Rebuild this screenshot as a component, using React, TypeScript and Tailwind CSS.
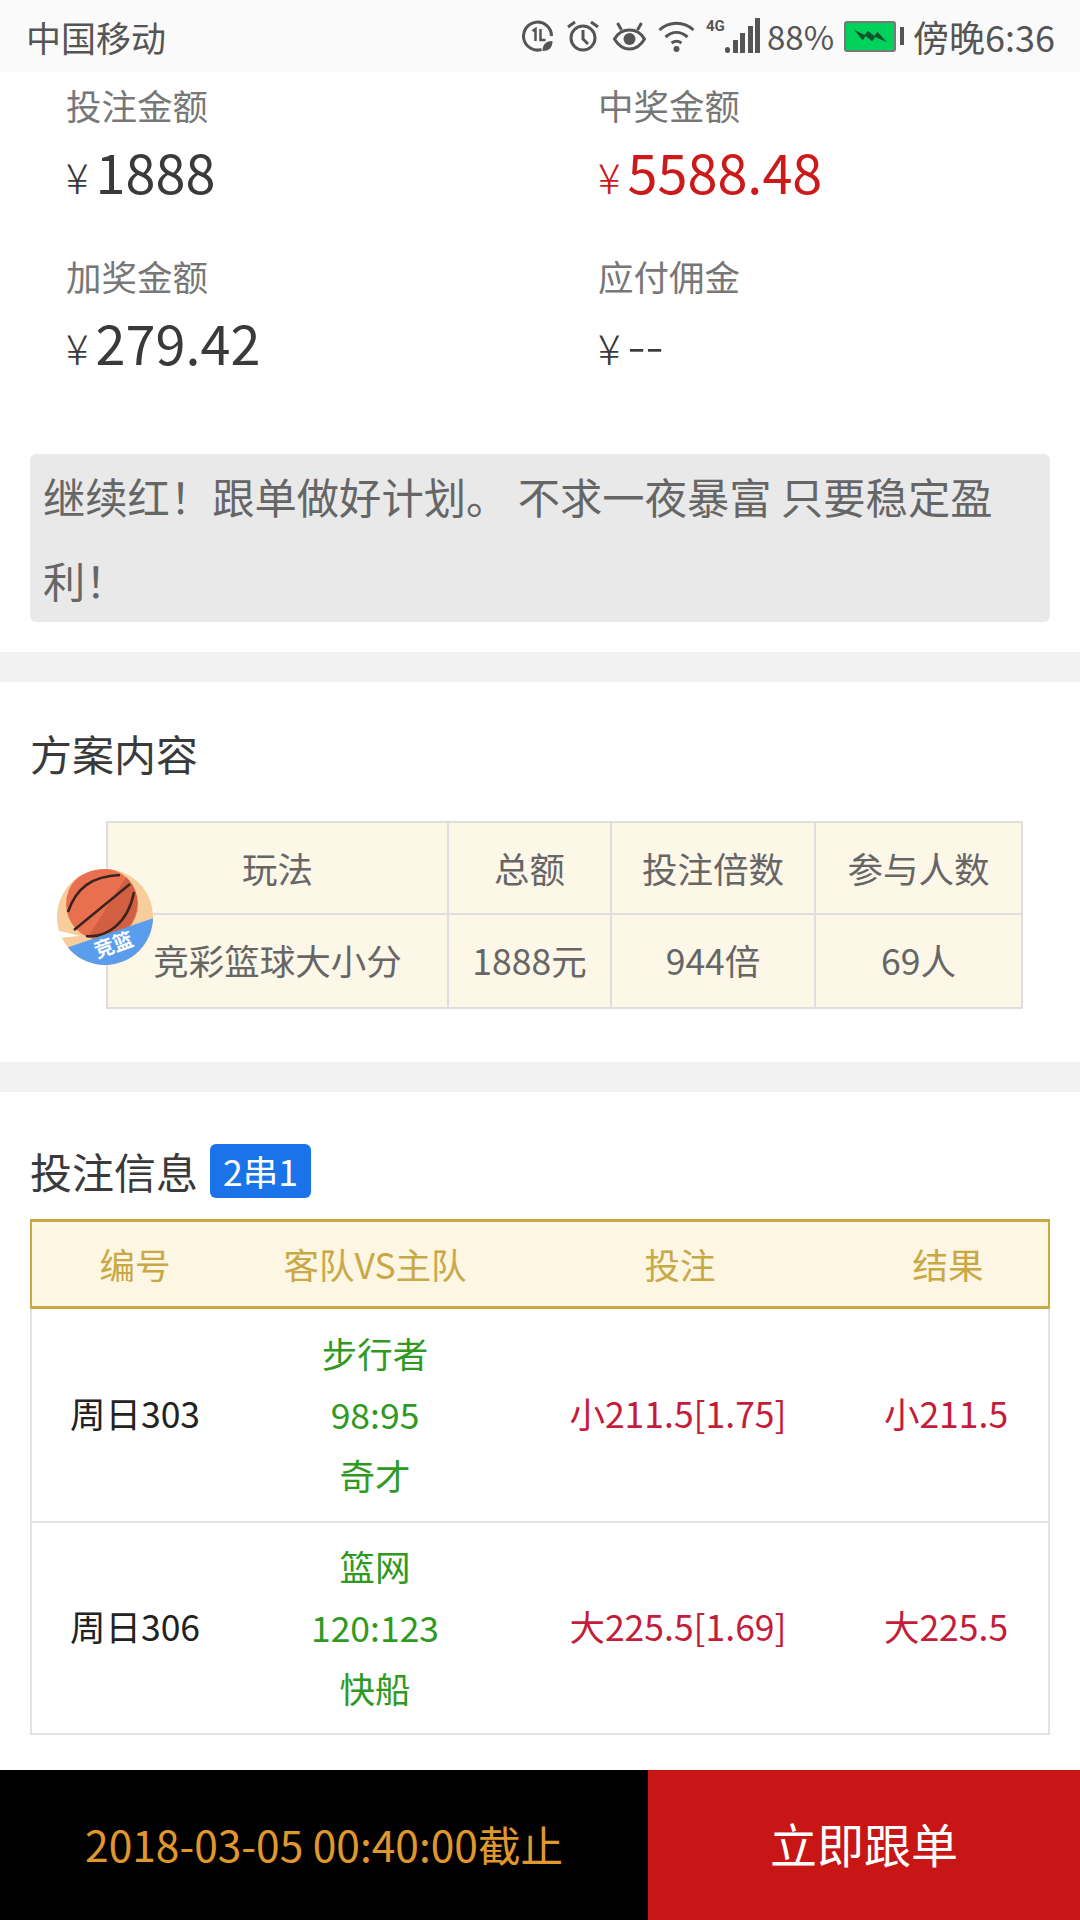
import React from "react";

const cjk = "font-['Noto_Sans_CJK_SC','Noto_Sans',sans-serif]";

const StatusIcons = () => (
  <div className="flex items-center text-[#555]">
    {/* 1L leaf data saver */}
    <svg width="33" height="34" viewBox="0 0 32 34" fill="none" stroke="#555" strokeWidth="3">
      <path d="M20 30.5A14 14 0 1 1 30 17" />
      <path d="M11 12l3-2v12M19 10v11h5" strokeWidth="2.5" />
      <path d="M21 32c0-7 4-10 10-10 0 7-4 10-10 10z" fill="#555" stroke="none" />
    </svg>
    {/* alarm */}
    <svg width="34" height="34" viewBox="0 0 34 34" className="ml-[12px]" fill="none" stroke="#555" strokeWidth="3">
      <circle cx="17" cy="19" r="12" />
      <path d="M17 11v9l5 5" />
      <path d="M2 8l7-5M32 8l-7-5" />
    </svg>
    {/* eye comfort */}
    <svg width="35" height="34" viewBox="0 0 34 34" className="ml-[12px]" fill="none" stroke="#555" strokeWidth="3">
      <path d="M2 20c4-7 9-9 15-9s11 2 15 9c-4 7-9 10-15 10S6 27 2 20z" />
      <circle cx="17" cy="20" r="6" fill="#555" stroke="none" />
      <path d="M5 4l4 7M29 4l-4 7" />
    </svg>
    {/* wifi */}
    <svg width="37" height="34" viewBox="0 0 36 34" className="ml-[11px]" fill="none" stroke="#555" strokeWidth="3">
      <path d="M1 11c10-9 24-9 34 0M7 18c7-6 15-6 22 0M13 24c3-2 7-2 10 0" />
      <circle cx="18" cy="30" r="3" fill="#555" stroke="none" />
    </svg>
    {/* 4G + signal */}
    <div className="relative ml-[11px] h-[34px] w-[54px]">
      <span className="absolute left-0 top-[-3px] font-['Roboto',sans-serif] text-[15px] font-bold leading-[20px] text-[#555]">4G</span>
      <div className="absolute bottom-0 left-[19px] flex items-end gap-[2.5px]">
        <div className="h-[6px] w-[5px] rounded-full bg-[#555]" />
        <div className="h-[13px] w-[5px] bg-[#555]" />
        <div className="h-[20px] w-[5px] bg-[#555]" />
        <div className="h-[27px] w-[5px] bg-[#555]" />
        <div className="h-[35px] w-[5px] bg-[#555]" />
      </div>
    </div>
    <span className="ml-[7px] text-[33px] leading-none">88%</span>
    {/* battery */}
    <div className="ml-[10px] flex items-center">
      <div className="flex h-[31px] w-[52px] items-center justify-center rounded-[3px] border-2 border-[#777] bg-[#00d25b]">
        <svg width="36" height="18" viewBox="0 0 34 16" fill="#14532d">
          <path d="M2 2l10 5 3-4 6 5 3-4 9 10-11-5-3 4-6-5-3 4z" />
        </svg>
      </div>
      <div className="ml-[4px] h-[18px] w-[4px] bg-[#555]" />
    </div>
    <span className="ml-[9px] text-[36px] leading-none">傍晚6:36</span>
  </div>
);

const Amount = ({ label, value, red, dash }: { label: string; value: string; red?: boolean; dash?: boolean }) => (
  <div>
    <div className="text-[35.5px] leading-[50px] text-[#777]">{label}</div>
    <div className={`mt-[6px] flex items-baseline leading-[70px] ${red ? "text-[#cc1a1a]" : "text-[#3a3a3a]"}`}>
      <span className="mr-[7px] text-[42px] font-light">¥</span>
      <span className={dash ? "text-[54px] font-light" : "text-[54px]"}>{value}</span>
    </div>
  </div>
);

const betRows = [
  { no: "周日303", away: "步行者", score: "98:95", home: "奇才", bet: "小211.5[1.75]", result: "小211.5" },
  { no: "周日306", away: "篮网", score: "120:123", home: "快船", bet: "大225.5[1.69]", result: "大225.5" },
];

const Ball = () => (
  <svg width="98" height="98" viewBox="0 0 98 98" className="absolute left-[-52px] top-[45px]">
    <defs>
      <clipPath id="badge">
        <circle cx="49" cy="49" r="48" />
      </clipPath>
    </defs>
    <g clipPath="url(#badge)">
      <rect width="98" height="98" fill="#f6cd9b" />
      <circle cx="46" cy="36" r="36" fill="#e8704e" />
      <path d="M70 9a36 36 0 0 1-8 58 36 36 0 0 1-30 2" fill="#d25f42" />
      <path d="M12 44C20 20 36 8 64 7M18 62L74 16M30 68c20 2 42-12 48-44" fill="none" stroke="#3a2420" strokeWidth="2.5" />
      <path d="M0 62l24 6-24 2z" fill="#fff" />
      <path d="M10 80L98 50V98H10z" fill="#5b9ded" />
      <text x="58" y="84" textAnchor="middle" transform="rotate(-20 58 78)" fontSize="20" fontWeight="700" fill="#fff" fontFamily="Noto Sans CJK SC">竞篮</text>
    </g>
  </svg>
);

export default function App() {
  return (
    <div className={`flex h-[1920px] w-[1080px] flex-col overflow-hidden bg-white ${cjk}`}>
      <div className="flex h-[72px] shrink-0 items-center justify-between bg-[#fafafa] pl-[26px] pr-[25px] text-[#555]">
        <span className="text-[35px] leading-none">中国移动</span>
        <StatusIcons />
      </div>

      <div className="grid grid-cols-[532px_1fr] gap-y-[40px] pl-[66px] pt-[8px]">
        <Amount label="投注金额" value="1888" />
        <Amount label="中奖金额" value="5588.48" red />
        <Amount label="加奖金额" value="279.42" />
        <Amount label="应付佣金" value="--" dash />
      </div>

      <div className="mx-[30px] mt-[72px] rounded-[6px] bg-[#e9e9e9] px-[13px] text-[42.3px] leading-[84px] text-[#666]">
        继续红！跟单做好计划。 不求一夜暴富 只要稳定盈利！
      </div>

      <div className="mt-[30px] h-[30px] bg-[#f2f2f2]" />

      <div className="px-[30px] pt-[42px]">
        <h2 className="text-[42px] leading-[58px] text-[#3a3a3a]">方案内容</h2>
        <div className="relative ml-[76px] mt-[39px] w-[917px] border-2 border-[#dedede] bg-[#fdf7e7] text-[35.5px] text-[#666]">
          <Ball />
          <div className="grid h-[92px] grid-cols-[341px_163px_204px_1fr] divide-x-2 divide-[#dedede] border-b-2 border-[#dedede] text-center leading-[90px]">
            <div>玩法</div>
            <div>总额</div>
            <div>投注倍数</div>
            <div>参与人数</div>
          </div>
          <div className="grid h-[92px] grid-cols-[341px_163px_204px_1fr] divide-x-2 divide-[#dedede] text-center leading-[90px]">
            <div>竞彩篮球大小分</div>
            <div>1888元</div>
            <div>944倍</div>
            <div>69人</div>
          </div>
        </div>
      </div>

      <div className="mt-[53px] h-[30px] shrink-0 bg-[#f2f2f2]" />

      <div className="px-[30px] pt-[50px]">
        <div className="flex items-center">
          <h2 className="text-[42px] leading-[58px] text-[#3a3a3a]">投注信息</h2>
          <span className="ml-[12px] rounded-[6px] bg-[#1a73e8] px-[13px] text-[35.5px] leading-[54px] text-white">2串1</span>
        </div>
        <div className="mt-[19px] grid h-[90px] grid-cols-[206px_274px_336px_1fr] items-center border-x-2 border-y-[3px] border-[#c9a846] bg-[#fdf6e3] text-center text-[35.5px] text-[#c9a846]">
          <div>编号</div>
          <div>客队VS主队</div>
          <div>投注</div>
          <div>结果</div>
        </div>
        <div className="border-x-2 border-b-2 border-[#e2e2e2]">
          {betRows.map((r, i) => (
            <div
              key={r.no}
              className={`grid h-[212px] grid-cols-[206px_274px_332px_1fr] items-center pb-[4px] text-center text-[35.5px] ${i > 0 ? "border-t-2 border-[#e2e2e2]" : ""}`}
            >
              <div className="text-[#222]">{r.no}</div>
              <div className="leading-[61px] text-[#2f9a1f]">
                <div>{r.away}</div>
                <div>{r.score}</div>
                <div>{r.home}</div>
              </div>
              <div className="text-[#c41d3a]">{r.bet}</div>
              <div className="text-[#c41d3a]">{r.result}</div>
            </div>
          ))}
        </div>
      </div>

      <div className="mt-auto flex h-[150px] shrink-0">
        <div className="flex w-[648px] items-center justify-center whitespace-pre bg-black pb-[3px] text-[42.5px] text-[#e0982e]">
          2018-03-05 00:40:00截止
        </div>
        <div className="flex flex-1 items-center justify-center bg-[#c81616] pb-[3px] text-[47px] text-white">立即跟单</div>
      </div>
    </div>
  );
}
